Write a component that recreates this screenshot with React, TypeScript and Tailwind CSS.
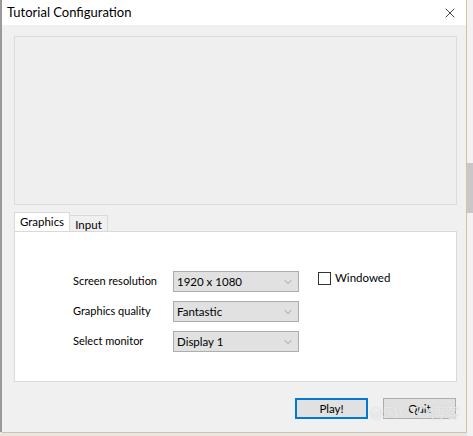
import { ChevronDown, X } from "lucide-react";

const font = { fontFamily: 'Lato, "Noto Sans", "Liberation Sans", Arial, sans-serif' };

function Select({ value }: { value: string }) {
  return (
    <div className="flex h-[21px] w-[126px] items-center justify-between border border-[#adadad] bg-[#e1e1e1] pl-[3px] pr-[4px] text-[11.5px] text-black">
      <span>{value}</span>
      <ChevronDown size={12} strokeWidth={1.1} className="text-[#666]" />
    </div>
  );
}

export default function App() {
  const rows = [
    { label: "Screen resolution", value: "1920 x 1080" },
    { label: "Graphics quality", value: "Fantastic" },
    { label: "Select monitor", value: "Display 1" },
  ];

  return (
    <div className="flex h-[436px] w-[473px] bg-[#e6e6e6]" style={font}>
      <div className="h-[432px] w-[2px] bg-[#9a9a9a]" />
      <div className="flex h-[433px] w-[465px] flex-col border-b border-r border-[#d8c497] bg-[#f0f0f0]">
        {/* title bar */}
        <div className="flex h-[25px] items-center justify-between bg-white pl-[5px] pr-[8px]">
          <span className="text-[13px] text-black">Tutorial Configuration</span>
          <X size={16} strokeWidth={1.1} className="text-black" />
        </div>

        {/* banner placeholder */}
        <div className="ml-[12px] mt-[11px] h-[169px] w-[443px] border border-[#dcdcdc] bg-[#efefef]" />

        {/* tabs */}
        <div className="ml-[12px] mt-[8px] flex h-[18px] items-end">
          <div className="relative z-10 flex h-[19px] w-[56px] items-center justify-center border border-b-0 border-[#d9d9d9] bg-white text-[11.5px]">
            Graphics
          </div>
          <div className="flex h-[16px] w-[38px] items-center justify-center border border-b-0 border-l-0 border-[#d9d9d9] bg-[#f0f0f0] pt-[2px] text-[11.5px]">
            Input
          </div>
        </div>
        <div className="ml-[12px] h-[151px] w-[443px] border border-[#d9d9d9] bg-white pl-[58px] pt-[39px]">
          <div className="flex">
            <div className="flex flex-col gap-[9px]">
              {rows.map((r) => (
                <div key={r.label} className="flex items-center">
                  <span className="w-[100px] text-[11px] text-black">{r.label}</span>
                  <Select value={r.value} />
                </div>
              ))}
            </div>
            <div className="ml-[19px] flex h-[14px] items-center gap-[4px] text-[11.5px]">
              <div className="h-[13px] w-[13px] border border-[#333] bg-white" />
              <span>Windowed</span>
            </div>
          </div>
        </div>

        {/* buttons */}
        <div className="relative mt-[16px] flex justify-end gap-[15px] pr-[10px]">
          <div className="flex h-[21px] w-[73px] items-center justify-center border-2 border-[#0078d7] bg-[#e1e1e1] text-[11.5px]">
            Play!
          </div>
          <div className="flex h-[21px] w-[73px] items-center justify-center border border-[#adadad] bg-[#e1e1e1] text-[11.5px]">
            Quit
          </div>
          <span className="pointer-events-none absolute right-[6px] top-[3px] text-[15px] text-white/60 [text-shadow:0_0_1px_#c4c4c4]">
            @51CTO博客
          </span>
        </div>
      </div>
      <div className="flex w-[6px] flex-col bg-[#f2f2f2] pt-[163px]">
        <div className="h-[50px] w-full bg-[#c8c8c8]" />
      </div>
    </div>
  );
}
